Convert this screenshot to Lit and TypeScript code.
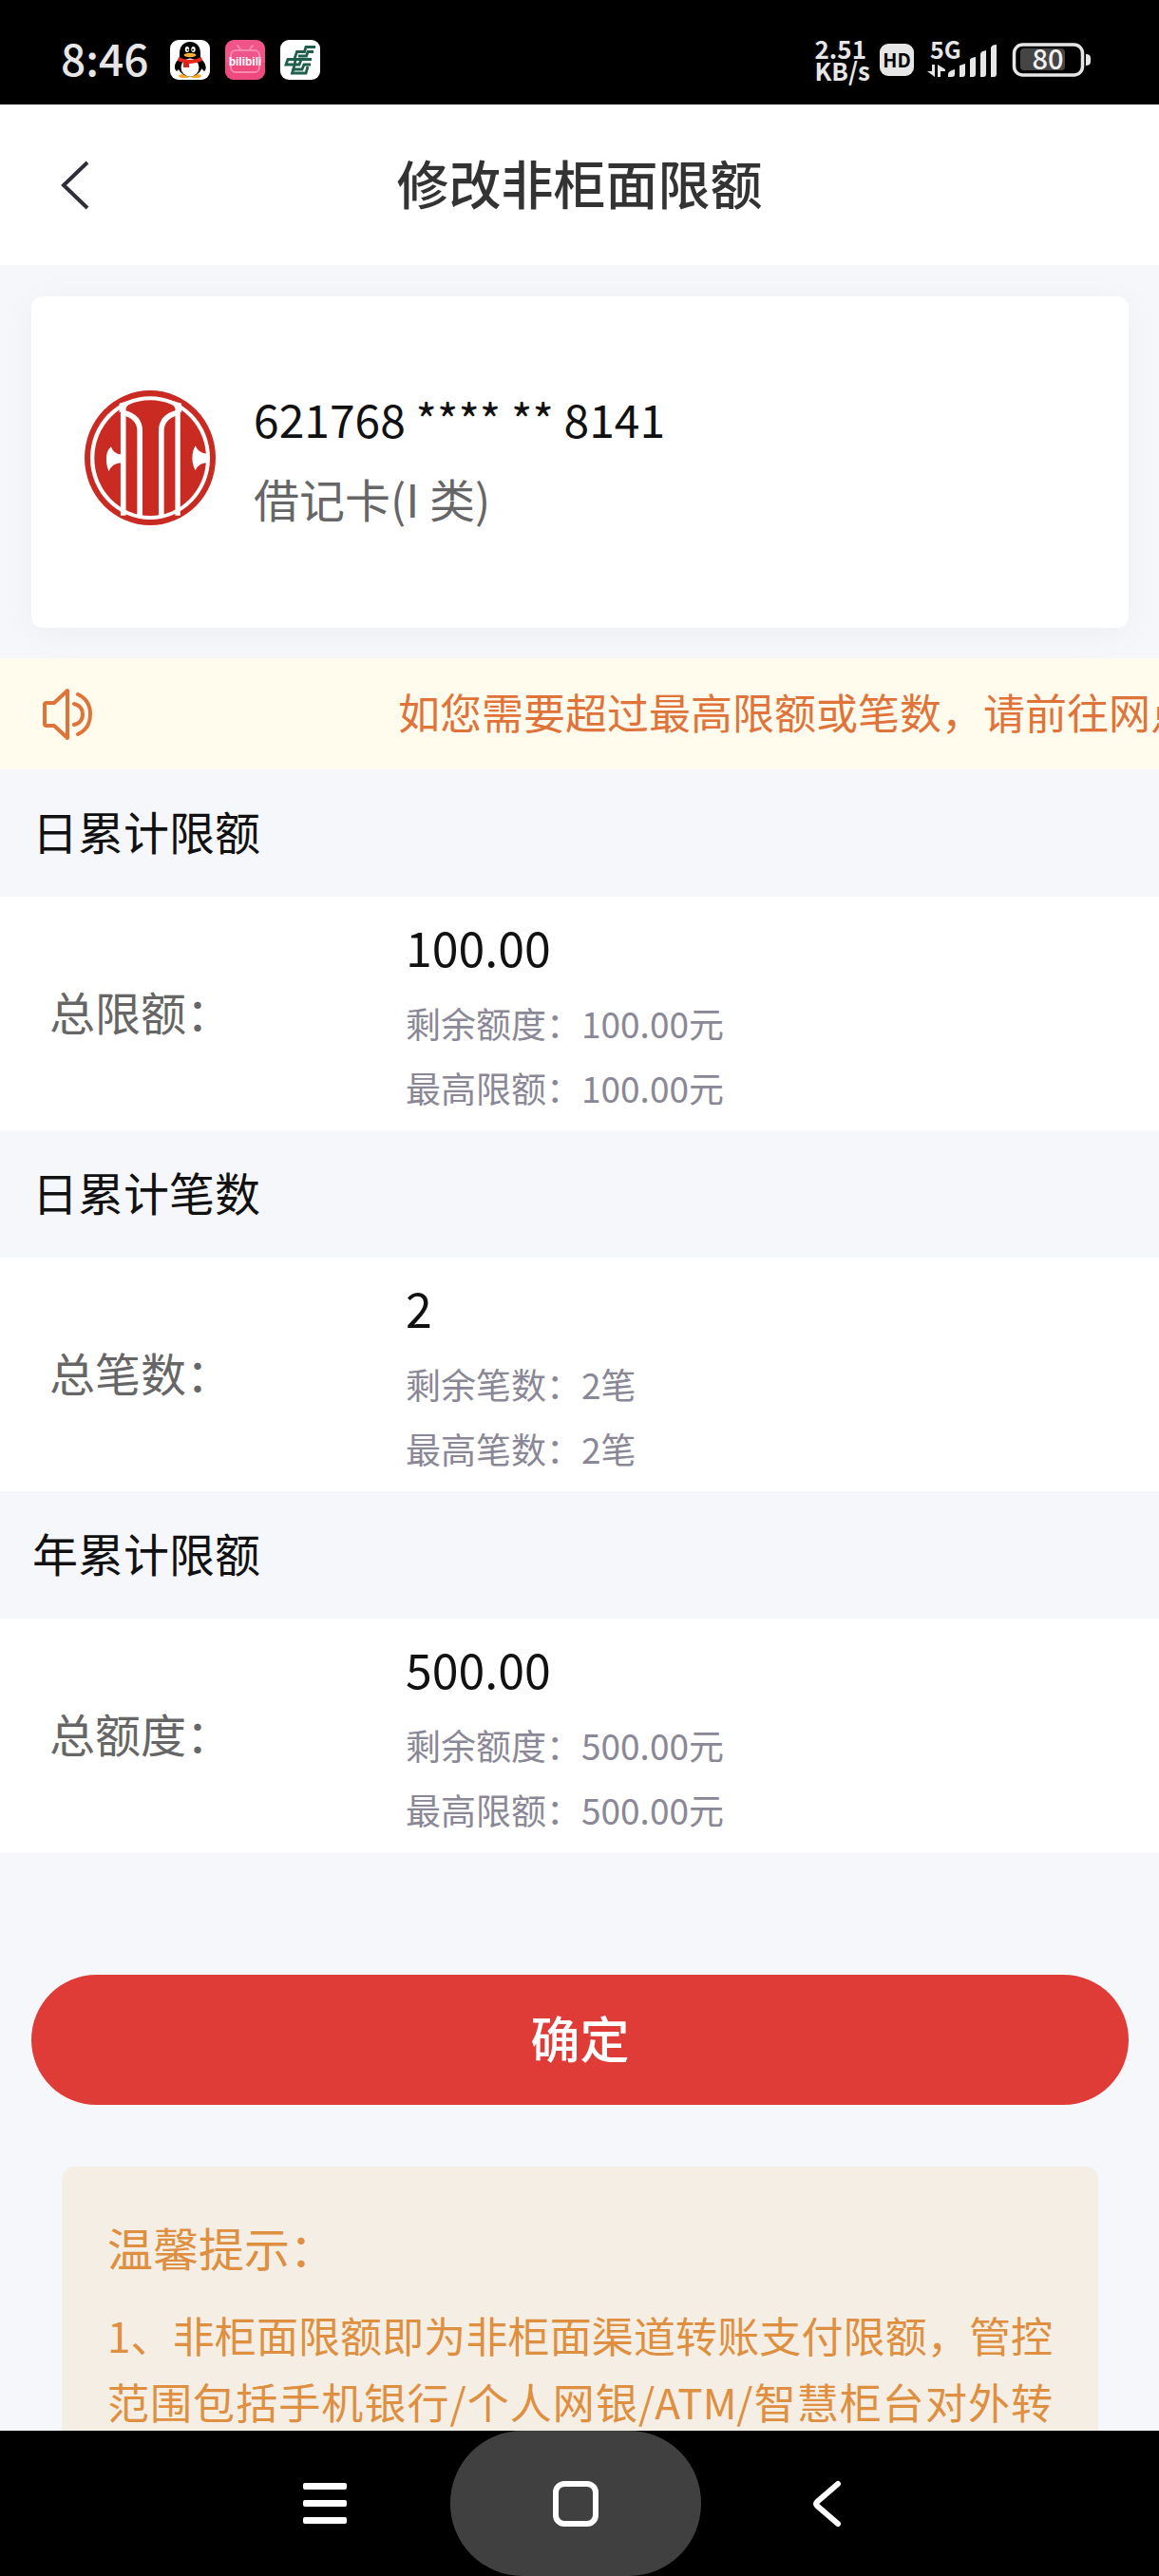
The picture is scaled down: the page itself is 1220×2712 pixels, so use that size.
import { LitElement, html, css, svg } from "lit";
import { customElement } from "lit/decorators.js";

interface LimitSection {
  title: string;
  label: string;
  value: string;
  notes: string[];
}

const SECTIONS: LimitSection[] = [
  {
    title: "日累计限额",
    label: "总限额：",
    value: "100.00",
    notes: ["剩余额度：100.00元", "最高限额：100.00元"],
  },
  {
    title: "日累计笔数",
    label: "总笔数：",
    value: "2",
    notes: ["剩余笔数：2笔", "最高笔数：2笔"],
  },
  {
    title: "年累计限额",
    label: "总额度：",
    value: "500.00",
    notes: ["剩余额度：500.00元", "最高限额：500.00元"],
  },
];

const fontStack = css`"Noto Sans CJK SC", "Noto Sans", sans-serif`;

@customElement("status-bar")
class StatusBar extends LitElement {
  static styles = css`
    :host {
      display: block;
      background: #000;
      color: #e6e6e6;
      font-family: ${fontStack};
    }
    .bar {
      display: flex;
      align-items: center;
      justify-content: space-between;
      height: 94px;
      padding: 16px 71px 0 64px;
    }
    .side {
      display: flex;
      align-items: center;
    }
    .clock {
      font-size: 46px;
      line-height: 60px;
      font-weight: 500;
      margin-right: 23px;
      padding-bottom: 6px;
    }
    .apps {
      display: flex;
      gap: 16px;
    }
    .speed {
      display: flex;
      flex-direction: column;
      font-size: 26px;
      line-height: 23px;
      font-weight: 700;
      padding-bottom: 2px;
    }
    .hd {
      margin: 0 14px 0 10px;
      width: 36px;
      border-radius: 9px;
      background: #e6e6e6;
      color: #000;
      text-align: center;
      font-size: 20px;
      line-height: 34px;
      font-weight: 700;
    }
    .signal {
      margin-right: 16px;
    }
    svg {
      display: block;
      overflow: visible;
    }
  `;

  render() {
    return html`
      <div class="bar">
        <div class="side">
          <span class="clock">8:46</span>
          <div class="apps">
            <svg width="42" height="42" viewBox="0 0 42 42" aria-hidden="true">
              <rect width="42" height="42" rx="9" fill="#fff" />
              <ellipse cx="15" cy="38" rx="6" ry="2" fill="#f5a623" />
              <ellipse cx="27" cy="38" rx="6" ry="2" fill="#f5a623" />
              <path d="M9 20C4 25 4 31 7 33L12 28ZM33 20C38 25 39 31 36 33L31 28Z" fill="#000" />
              <ellipse cx="21" cy="26" rx="13" ry="12.5" fill="#000" />
              <path d="M10 20V14C10 6 15 2 21 2S32 6 32 14V20Z" fill="#000" />
              <ellipse cx="21" cy="29" rx="9.5" ry="9.5" fill="#fff" />
              <path d="M9 18Q21 24 33 18L34 22Q21 28 8 22Z" fill="#e5291f" />
              <path d="M14 23H20V29H14Z" fill="#d8231b" />
              <ellipse cx="18" cy="10" rx="2.2" ry="3" fill="#fff" />
              <ellipse cx="24.5" cy="10" rx="2.2" ry="3" fill="#fff" />
              <circle cx="18.5" cy="10.5" r="1" fill="#000" />
              <circle cx="24" cy="10.5" r="1" fill="#000" />
              <ellipse cx="21" cy="16" rx="6.5" ry="2.2" fill="#f9b233" />
            </svg>
            <svg width="42" height="42" viewBox="0 0 42 42" aria-hidden="true">
              <rect width="42" height="42" rx="9" fill="#f0558a" />
              <path d="M0 24H42V33A9 9 0 0 1 33 42H9A9 9 0 0 1 0 33Z" fill="#ee4678" opacity="0.7" />
              <rect x="6" y="11" width="30" height="23" rx="5" fill="none" stroke="#f588ab" stroke-width="2" />
              <path d="M13 6L17 11M29 6L25 11" stroke="#f588ab" stroke-width="2" stroke-linecap="round" />
              <text x="21" y="27" text-anchor="middle" font-family="Liberation Sans" font-size="12" font-weight="700" fill="#fff">bilibili</text>
            </svg>
            <svg width="42" height="42" viewBox="0 0 42 42" aria-hidden="true">
              <rect width="42" height="42" rx="9" fill="#fff" />
              <g fill="none" stroke="#1f5f4b" stroke-width="2.8">
                <path d="M37 7.5H27L25.5 12.5H17.5L15 20" />
                <path d="M35 12.5H29L27.5 17H19" />
                <path d="M33 20.5H8L6 26H20L22 21M32 26H25L23 31H14L16 21" />
                <path d="M14 30L12.5 35H27L29 28" />
              </g>
            </svg>
          </div>
        </div>
        <div class="side">
          <div class="speed"><span>2.51</span><span>KB/s</span></div>
          <span class="hd">HD</span>
          <svg class="signal" width="74" height="42" viewBox="0 0 74 42" role="img" aria-label="5G">
            <text x="3" y="20" font-size="25" font-weight="700" fill="#e6e6e6">5G</text>
            <g fill="#e6e6e6">
              <path d="M5 26H8V39L0 33H5ZM11 39V26L19 31V33H14V39Z" />
              <path d="M22 39V36Q22 33 29 31V36Q29 39 26 39Z" />
              <path d="M34 39V27L40 25V36Q40 39 37 39Z" />
              <path d="M45 39V21Q45 19 51 18V36Q51 39 48 39Z" />
              <path d="M56 39V15Q56 12 62 11V36Q62 39 59 39Z" />
              <path d="M67 39V9Q67 5 73 5V36Q73 39 70 39Z" />
            </g>
          </svg>
          <svg width="83" height="36" viewBox="0 0 83 36" role="img" aria-label="80">
            <rect x="1.5" y="2" width="72" height="32" rx="9" fill="none" stroke="#e6e6e6" stroke-width="3.5" />
            <rect x="8" y="6" width="47" height="23" rx="4" fill="#454545" />
            <path d="M77 12Q82 12 82 16V20Q82 24 77 24Z" fill="#e6e6e6" />
            <text x="37" y="28" text-anchor="middle" font-size="29" fill="#f2f2f2" font-weight="500">80</text>
          </svg>
        </div>
      </div>
    `;
  }
}

@customElement("limit-section")
class LimitSectionView extends LitElement {
  static properties = { data: { attribute: false } };
  declare data: LimitSection;

  static styles = css`
    :host {
      display: block;
      font-family: ${fontStack};
    }
    .title {
      margin: 0;
      padding: 28px 34px 34px;
      font-size: 48px;
      line-height: 72px;
      font-weight: 400;
      color: #111;
    }
    .row {
      display: grid;
      grid-template-columns: 35% 1fr;
      align-items: center;
      padding: 13px 0 11px;
      background: #fff;
    }
    .label {
      padding: 0 0 8px 52px;
      font-size: 48px;
      line-height: 72px;
      color: #666;
    }
    .value {
      margin: 0 0 8px;
      font-size: 50px;
      line-height: 78px;
      color: #111;
    }
    .note {
      margin: 0;
      font-size: 37px;
      line-height: 68px;
      color: #8a8896;
    }
  `;

  render() {
    const { title, label, value, notes } = this.data;
    return html`
      <h2 class="title">${title}</h2>
      <div class="row">
        <span class="label">${label}</span>
        <div>
          <p class="value">${value}</p>
          ${notes.map((note) => html`<p class="note">${note}</p>`)}
        </div>
      </div>
    `;
  }
}

const bankLogo = svg`
  <ellipse cx="293.5" cy="272.5" rx="207.5" ry="213.5" fill="#c92a22" />
  <ellipse cx="293.5" cy="273" rx="189.5" ry="195" fill="#fff" />
  <ellipse cx="294" cy="273" rx="177" ry="183" fill="#c92a22" />
  <path d="M208 130Q261 142 261 188V462M381 130Q329 142 329 188V462" fill="none" stroke="#fff" stroke-width="17" />
  <g fill="#fff">
    <path d="M200 100H217V455H200ZM373 100H389V455H373Z" />
    <path d="M196 100L236 88L240 96Q222 104 218 114L196 130ZM393 100L352 88L348 96Q368 104 372 114L393 130Z" />
    <path d="M202 262Q178 260 170 237Q155 250 155 275Q155 300 163 315Q172 290 202 288Z" />
    <path d="M474 260Q447 258 437 234Q427 250 427 272Q427 298 437 312Q447 288 474 288Z" />
  </g>
`;

@customElement("app-root")
class AppRoot extends LitElement {
  static styles = css`
    :host {
      display: block;
      font-family: ${fontStack};
      color: #111;
    }
    .screen {
      display: flex;
      flex-direction: column;
      height: 100vh;
      background: #f5f7fb;
    }
    button {
      border: 0;
      padding: 0;
      background: none;
      font-family: inherit;
      color: inherit;
      cursor: pointer;
    }
    svg {
      display: block;
    }
    .header {
      display: grid;
      grid-template-columns: 120px 1fr 120px;
      align-items: center;
      min-height: 169px;
      background: #fff;
    }
    .back {
      display: grid;
      justify-content: start;
      padding: 20px 0 20px 62px;
    }
    .heading {
      margin: 0;
      padding-bottom: 8px;
      text-align: center;
      font-size: 55px;
      line-height: 80px;
      font-weight: 500;
      color: #333;
    }
    .content {
      flex: 1 1 0;
      min-height: 0;
      overflow: hidden auto;
      scrollbar-width: none;
    }
    .card {
      display: flex;
      align-items: center;
      gap: 40px;
      margin: 33px 32px 32px 33px;
      padding: 86px 56px 95px;
      border-radius: 12px;
      background: #fff;
      box-shadow: 0 6px 40px rgba(0, 0, 0, 0.04);
    }
    .logo {
      flex: none;
    }
    .card-text {
      display: flex;
      flex-direction: column;
      line-height: 84px;
    }
    .number {
      font-size: 48px;
    }
    .kind {
      font-size: 48px;
      color: #666;
    }
    .notice {
      display: flex;
      align-items: center;
      height: 117px;
      overflow: hidden;
      background: #fffced;
      color: #df733a;
    }
    .speaker {
      flex: none;
      margin: 0 318px 0 43px;
    }
    .marquee {
      white-space: nowrap;
      padding-bottom: 6px;
      font-size: 44px;
      line-height: 66px;
    }
    .submit {
      display: block;
      width: calc(100% - 65px);
      margin: 129px 32px 65px 33px;
      padding-bottom: 5px;
      border-radius: 69px;
      background: #df3c37;
      color: #fff;
      font-size: 52px;
      line-height: 132px;
      font-weight: 500;
    }
    .tips {
      margin: 0 64px 0 65px;
      padding: 48px;
      border-radius: 14px;
      background: #f4eee4;
      color: #de8f40;
    }
    .tips-title {
      margin: 0 0 22px;
      font-size: 48px;
      line-height: 72px;
      font-weight: 400;
    }
    .tips-body {
      margin: 0;
      font-size: 44px;
      line-height: 70px;
      text-align: justify;
      text-align-last: justify;
    }
    .nav {
      display: flex;
      justify-content: center;
      padding-right: 9px;
      background: #000;
    }
    .nav-button {
      display: grid;
      place-items: center;
      width: 264px;
      height: 153px;
      border-radius: 76px;
    }
    .active {
      background: #404040;
    }
  `;

  render() {
    return html`
      <div class="screen">
        <status-bar></status-bar>
        <header class="header">
          <button class="back" aria-label="返回">
            <svg width="34" height="54" viewBox="0 0 34 54" fill="none" stroke="#2f2f3a" stroke-width="4">
              <path d="M30 3L5 27L30 51" />
            </svg>
          </button>
          <h1 class="heading">修改非柜面限额</h1>
        </header>
        <main class="content">
          <section class="card">
            <svg class="logo" width="138" height="142" viewBox="86 59 415 427" aria-hidden="true">${bankLogo}</svg>
            <div class="card-text">
              <span class="number">621768 **** ** 8141</span>
              <span class="kind">借记卡(I 类)</span>
            </div>
          </section>
          <div class="notice">
            <svg class="speaker" width="58" height="58" viewBox="0 0 58 58" fill="none" stroke="#df733a" stroke-width="4" stroke-linecap="round" stroke-linejoin="round" aria-hidden="true">
              <path d="M28 4V54L14 41H6Q4 41 4 39V19Q4 17 6 17H14Z" />
              <path d="M35 18Q44 20 44 29T35 40M39 8Q52 14 52 29T39 50" />
            </svg>
            <span class="marquee">如您需要超过最高限额或笔数，请前往网点</span>
          </div>
          ${SECTIONS.map((s) => html`<limit-section .data=${s}></limit-section>`)}
          <button class="submit">确定</button>
          <section class="tips">
            <h2 class="tips-title">温馨提示：</h2>
            <p class="tips-body">1、非柜面限额即为非柜面渠道转账支付限额，管控范围包括手机银行/个人网银/ATM/智慧柜台对外转</p>
          </section>
        </main>
        <nav class="nav">
          <button class="nav-button" aria-label="菜单">
            <svg width="46" height="44" viewBox="0 0 46 44" fill="#fff">
              <rect width="46" height="7" rx="2" />
              <rect y="18" width="46" height="7" rx="2" />
              <rect y="36" width="46" height="7" rx="2" />
            </svg>
          </button>
          <button class="nav-button active" aria-label="主页">
            <svg width="48" height="48" viewBox="0 0 48 48" fill="none" stroke="#fff" stroke-width="6">
              <rect x="3" y="3" width="42" height="42" rx="9" />
            </svg>
          </button>
          <button class="nav-button" aria-label="后退">
            <svg width="32" height="50" viewBox="0 0 32 50" fill="none" stroke="#fff" stroke-width="6" stroke-linecap="round" stroke-linejoin="round">
              <path d="M28 4L6 23Q4 25 6 27L28 46" />
            </svg>
          </button>
        </nav>
      </div>
    `;
  }
}
